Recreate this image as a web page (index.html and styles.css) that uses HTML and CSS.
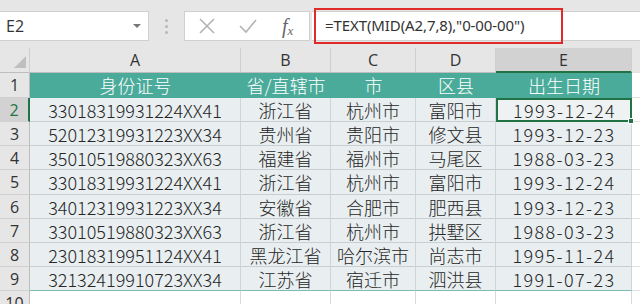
FILE: index.html
```html
<!DOCTYPE html>
<html lang="zh">
<head>
<meta charset="utf-8">
<link rel="stylesheet" href="styles.css">
</head>
<body>
<div class="app">
  <div class="toolbar">
    <div class="namebox"><span>E2</span><span class="drop"></span></div>
    <div class="dots"><i></i><i></i><i></i></div>
    <div class="fnbox">
      <svg class="ico" width="18" height="18" viewBox="0 0 18 18"><path d="M2 2 L16 16 M16 2 L2 16" stroke="#b3b3b3" stroke-width="1.6" fill="none"/></svg>
      <svg class="ico" width="20" height="18" viewBox="0 0 20 18"><path d="M2 9 L8 15 L18 3" stroke="#b3b3b3" stroke-width="1.6" fill="none"/></svg>
      <span class="fx">f<sub>x</sub></span>
    </div>
    <div class="formula"><div class="ftext">=TEXT(MID(A2,7,8),"0-00-00")</div></div>
  </div>
  <div class="grid">
    <div class="ch corner"><span class="tri"></span></div>
    <div class="ch">A</div><div class="ch">B</div><div class="ch">C</div><div class="ch">D</div><div class="ch sel">E</div><div class="ch tail"></div>

    <div class="rh r1">1</div>
    <div class="hd r1">身份证号</div><div class="hd r1">省/直辖市</div><div class="hd r1">市</div><div class="hd r1">区县</div><div class="hd r1">出生日期</div><div class="tail r1"></div>

    <div class="rh rsel">2</div>
    <div class="c">33018319931224XX41</div><div class="c">浙江省</div><div class="c">杭州市</div><div class="c">富阳市</div><div class="c d active">1993-12-24<span class="handle"></span></div><div class="tail"></div>

    <div class="rh">3</div>
    <div class="c">52012319931223XX34</div><div class="c">贵州省</div><div class="c">贵阳市</div><div class="c">修文县</div><div class="c d">1993-12-23</div><div class="tail"></div>

    <div class="rh">4</div>
    <div class="c">35010519880323XX63</div><div class="c">福建省</div><div class="c">福州市</div><div class="c">马尾区</div><div class="c d">1988-03-23</div><div class="tail"></div>

    <div class="rh">5</div>
    <div class="c">33018319931224XX41</div><div class="c">浙江省</div><div class="c">杭州市</div><div class="c">富阳市</div><div class="c d">1993-12-24</div><div class="tail"></div>

    <div class="rh">6</div>
    <div class="c">34012319931223XX34</div><div class="c">安徽省</div><div class="c">合肥市</div><div class="c">肥西县</div><div class="c d">1993-12-23</div><div class="tail"></div>

    <div class="rh">7</div>
    <div class="c">33010519880323XX63</div><div class="c">浙江省</div><div class="c">杭州市</div><div class="c">拱墅区</div><div class="c d">1988-03-23</div><div class="tail"></div>

    <div class="rh">8</div>
    <div class="c">23018319951124XX41</div><div class="c">黑龙江省</div><div class="c">哈尔滨市</div><div class="c">尚志市</div><div class="c d">1995-11-24</div><div class="tail"></div>

    <div class="rh">9</div>
    <div class="c last">32132419910723XX34</div><div class="c last">江苏省</div><div class="c last">宿迁市</div><div class="c last">泗洪县</div><div class="c d last">1991-07-23</div><div class="tail"></div>

    <div class="rh">10</div>
    <div class="e"></div><div class="e"></div><div class="e"></div><div class="e"></div><div class="e"></div><div class="tail"></div>
  </div>
</div>
</body>
</html>
```
FILE: styles.css
```css
* { box-sizing: border-box; }
html, body { margin: 0; padding: 0; }
body { width: 640px; height: 304px; overflow: hidden; background: #fff; font-family: "Noto Sans CJK SC", "Noto Sans", sans-serif; }
.app { width: 640px; height: 304px; overflow: hidden; }

.toolbar { height: 48px; background: #e6e6e6; display: flex; align-items: flex-start; padding-top: 11px; }
.namebox { width: 149px; height: 30px; background: #fff; border: 1px solid #d0d0d0; border-left: none; display: flex; align-items: center; justify-content: space-between; padding: 0 6px 0 6px; font-family: "Open Sans", "Noto Sans", sans-serif; font-size: 16px; color: #333; }
.drop { width: 0; height: 0; border-left: 4px solid transparent; border-right: 4px solid transparent; border-top: 4px solid #777; margin-right: 1px; }
.dots { width: 35px; height: 30px; display: flex; flex-direction: column; align-items: center; justify-content: center; gap: 3px; }
.dots i { display: block; width: 3px; height: 3px; background: #b8b8b8; border-radius: 50%; }
.fnbox { width: 126px; height: 30px; background: #fff; border: 1px solid #d0d0d0; display: flex; align-items: center; padding-left: 13px; gap: 22px; }
.ico { display: block; }
.fx { font-family: "Liberation Serif", serif; font-style: italic; font-size: 20px; color: #666; margin-left: 2px; line-height: 1; }
.fx sub { font-size: 13px; vertical-align: -2px; }
.formula { flex: 1; height: 30px; background: #fff; border-top: 1px solid #d0d0d0; border-bottom: 1px solid #d0d0d0; position: relative; margin-left: 2px; }
.ftext { position: absolute; left: 2px; top: -4px; width: 249px; height: 36px; border: 2.5px solid #e02a2a; padding-left: 9px; font-family: "Noto Sans", sans-serif; font-size: 15px; line-height: 30px; color: #333; letter-spacing: -0.1px; }

.grid { display: grid; grid-template-columns: 30px 211px 90px 85px 80px 136px 8px; grid-template-rows: 25px 25px 24px 24px 24px 25px 24px 24px 24px 24px 24px; }
.grid > div { display: flex; align-items: center; justify-content: center; }

.ch { background: #e6e6e6; border-right: 1px solid #cfcfcf; border-bottom: 1px solid #bdbdbd; font-family: "Open Sans", "Noto Sans", sans-serif; font-size: 16px; color: #333; }
.ch.corner { position: relative; }
.tri { position: absolute; right: 3px; bottom: 4px; width: 0; height: 0; border-left: 12px solid transparent; border-bottom: 12px solid #bfbfbf; }
.ch.sel { background: #d2d2d2; border-bottom: 2px solid #217346; color: #333; }
.ch.tail { border-right: none; background: #e6e6e6; }

.rh { background: #e6e6e6; border-right: 1px solid #bdbdbd; border-bottom: 1px solid #d0d0d0; font-family: "Open Sans", "Noto Sans", sans-serif; font-size: 16px; color: #333; }
.rh.rsel { background: #d2d2d2; border-right: 2px solid #217346; color: #217346; }

.hd { background: #4bab9a; color: #fff; font-size: 18px; font-weight: 300; border-bottom: 1px solid #4bab9a; }
.tail { background: #fff; border-bottom: 1px solid #e2e2e2; }

.c { background: #e9eef0; border-right: 1px solid #cdd5d7; border-bottom: 1px solid #c7cfd1; font-size: 18px; color: #262626; font-weight: 300; }
.c.d { letter-spacing: 1.4px; padding-left: 1px; }
.c.last { border-bottom: 1px solid #7cbcb0; }
.c.active { position: relative; border: 2px solid #217346; background: #eef2f3; }
.handle { position: absolute; right: -4px; bottom: -4px; width: 6px; height: 6px; background: #217346; border: 1px solid #fff; }

.e { background: #fff; border-right: 1px solid #d9d9d9; }
```
